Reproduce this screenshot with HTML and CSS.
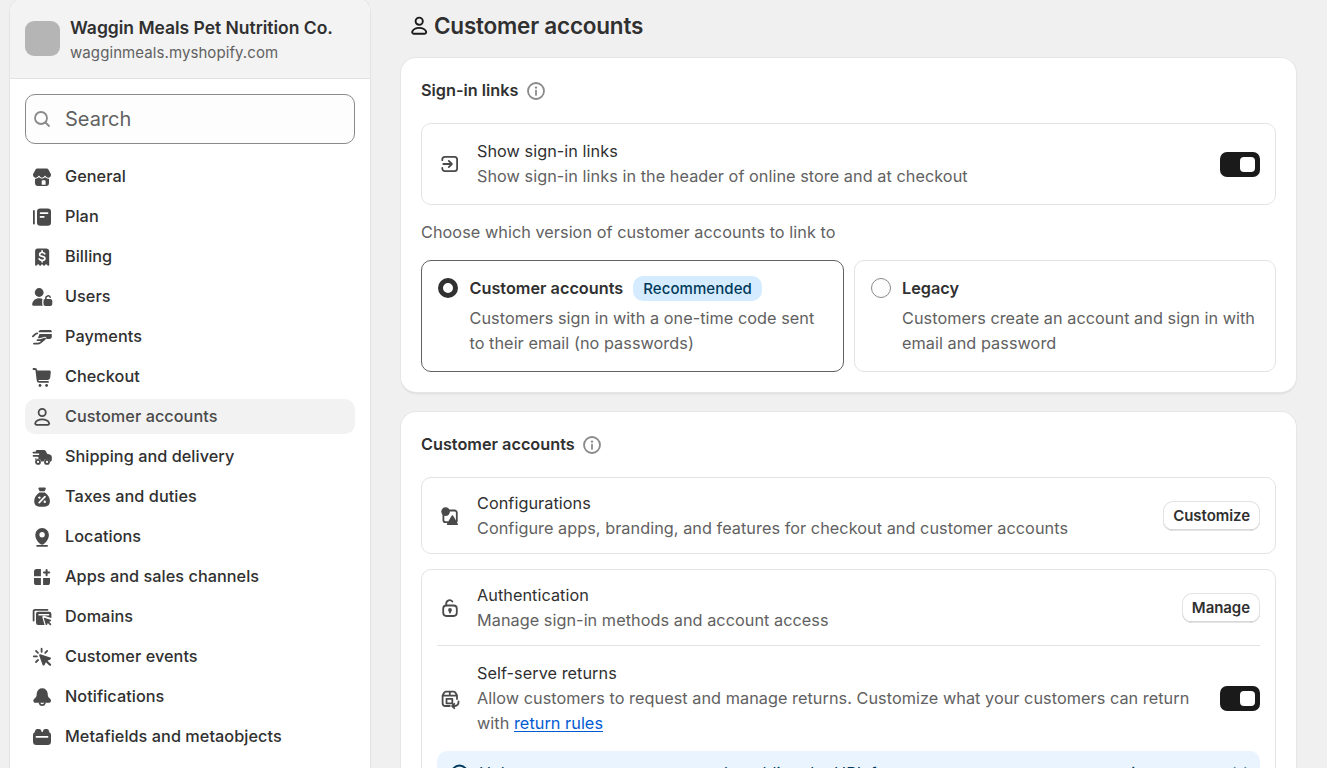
FILE: index.html
```html
<!DOCTYPE html>
<html lang="en">
<head>
<meta charset="utf-8">
<title>Customer accounts</title>
<link rel="stylesheet" href="styles.css">
</head>
<body>
<div class="page">
  <aside class="sidebar">
    <div class="store">
      <div class="avatar"></div>
      <div>
        <div class="store-name">Waggin Meals Pet Nutrition Co.</div>
        <div class="store-url">wagginmeals.myshopify.com</div>
      </div>
    </div>
    <div class="search">
      <svg class="icon20" viewBox="0 0 20 20" fill="none" stroke="#8a8a8a" stroke-width="1.8" stroke-linecap="round"><circle cx="9" cy="9" r="6"/><path d="M13.500 13.500 17 17"/></svg>
      <span>Search</span>
    </div>
    <nav class="nav">
      <a class="item"><svg class="icon20" viewBox="0 0 20 20"><path d="M5.200 1.500h9.600c.7 0 1.300.400 1.600 1L19 7.300v.7a2.700 2.700 0 0 1-4.600 1.900L13.300 8.800a.4.400 0 0 0-.6 0l-1.100 1.100a2.300 2.300 0 0 1-3.200 0L7.300 8.800a.4.400 0 0 0-.6 0L5.600 9.900A2.700 2.700 0 0 1 1 8v-.7l2.600-4.800c.3-.6.900-1 1.600-1Z"/><path fill-rule="evenodd" d="M3 11.700c1.300.2 2.600-.2 3.600-1.100L7 10.300l.4.300c1.500 1.400 3.700 1.400 5.200 0l.4-.3.400.3c1 .9 2.300 1.300 3.600 1.100V16a3 3 0 0 1-3 3H6a3 3 0 0 1-3-3ZM10.600 13.300c-.5 0-.9.4-.9.9V17.700h3.900v-3.500c0-.5-.4-.9-.9-.9Z"/></svg>General</a>
      <a class="item"><svg class="icon20" viewBox="0 0 20 20"><path d="M1.900 4v12.500" class="line"/><path fill-rule="evenodd" d="M8.200 1.500h7.600A3.200 3.200 0 0 1 19 4.700v10.800a3.200 3.200 0 0 1-3.200 3.200H8.200A3.200 3.200 0 0 1 5 15.500V4.700a3.200 3.200 0 0 1 3.200-3.200ZM8.600 5.200a.9.900 0 0 0 0 1.800h6.900a.9.900 0 0 0 0-1.800ZM8.600 9a.9.900 0 0 0 0 1.800h3.100a.9.900 0 0 0 0-1.800Z"/></svg>Plan</a>
      <a class="item"><svg class="icon20" viewBox="0 0 20 20"><path d="M6 1.500h8.500A2.700 2.700 0 0 1 17.200 4v14c0 .8-.9 1.100-1.500.6L14 17l-1.300 1.400c-.4.400-.9.400-1.300 0L10.100 17l-1.300 1.400c-.4.400-.9.400-1.300 0L6.200 17l-1.700 1.600c-.5.500-1.400.2-1.400-.6V4.200A2.700 2.700 0 0 1 6 1.500Z"/><path class="cut" d="M12.800 6.800c-.5-.9-1.500-1.300-2.700-1.300-1.400 0-2.500.7-2.500 1.900 0 2.800 5.300 1.200 5.300 4 0 1.200-1.200 1.900-2.700 1.900-1.400 0-2.500-.5-3-1.500M10.100 3.800v1.500M10.100 13.500v1.300"/></svg>Billing</a>
      <a class="item"><svg class="icon20" viewBox="0 0 20 20"><circle cx="7.200" cy="5.500" r="4.400"/><path d="M7.200 11.200c1.300 0 2.500.2 3.400.7-.3.500-.4 1-.4 1.600v3.200c0 .8.200 1.500.7 2.100H1.700c-1 0-1.700-.8-1.500-1.800.5-3.400 3.300-5.800 7-5.800Z"/><path fill-rule="evenodd" d="M13 12v-.8a3.100 3.100 0 0 1 5.900-1.300c.4.900-.9 1.600-1.400.7a1.500 1.500 0 0 0-2.900.6v.8h3.700c1.100 0 2 .9 2 2v3c0 1.100-.9 2-2 2H13.500c-1.100 0-2-.9-2-2v-3c0-1.100.5-1.900 1.500-2Z"/></svg>Users</a>
      <a class="item"><svg class="icon20" viewBox="0 0 20 20"><path d="M8.800 3h9.400c.9 0 1.600.7 1.600 1.600v.6H6.400C6.800 3.800 7.500 3 8.800 3ZM7.500 7h12.300v2.800c0 1.300-.9 2.200-2.200 2.200h-3.300c.5-1.400-.7-2.600-2.200-2.100L7.200 11.300c-.6.200-1.300-.2-1.100-.9Z"/><path class="line" d="M.9 9.400 3 7.400c.6-.6 1.300-.9 2.200-1M2 16.600h3.500c1.100 0 2.100-.3 3-1l4.500-3.900-4.700 1.500H5.500"/></svg>Payments</a>
      <a class="item"><svg class="icon20" viewBox="0 0 20 20"><path d="M4 3.500h13.300c.9 0 1.500.7 1.500 1.600l-.6 5.300c-.2 1.500-1.300 2.500-2.700 2.500H5.700Z"/><path class="line" d="M1.500 2h1.300c.9 0 1.500.6 1.600 1.500l1.200 9.800c.1.900.7 1.600 1.600 1.600H16"/><circle cx="8" cy="18.500" r="1.400"/><circle cx="14.600" cy="18.500" r="1.400"/></svg>Checkout</a>
      <a class="item active"><svg class="icon20" viewBox="0 0 20 20"><circle class="line" cx="10.200" cy="5.500" r="3.600"/><path class="line" d="M10.200 12.300c3.600 0 5.800 1.500 6.800 3.300.6 1-.1 2.200-1.300 2.200h-11c-1.200 0-1.900-1.200-1.300-2.200 1-1.800 3.200-3.300 6.800-3.300Z"/></svg>Customer accounts</a>
      <a class="item"><svg class="icon20" viewBox="0 0 20 20"><path fill-rule="evenodd" d="M4.400 3h7.200c1.200 0 2 .5 2.500 1.500l1 2.200 2.800.9c1.200.4 1.900 1.300 1.900 2.500v2.500c0 1.300-.7 2.200-1.700 2.400a3.400 3.400 0 0 0-6.600-.4h-2.200A3.400 3.400 0 0 0 3 13.200v-1.700h2.600a.9.900 0 0 0 0-1.800H1.500a.8.800 0 0 1 0-1.600h5.200a.9.900 0 0 0 0-1.700H1.300a.8.800 0 0 1 0-1.600h2.300Z"/><circle class="line" cx="6" cy="14.900" r="2"/><circle class="line" cx="15" cy="14.900" r="2"/></svg>Shipping and delivery</a>
      <a class="item"><svg class="icon20" viewBox="0 0 20 20"><path d="M7.300.5h5.600c.7 0 1.200.8.800 1.400l-1.100 2.400h-5L6.500 1.900C6.100 1.300 6.600.5 7.300.5ZM7.400 5.600h5.400c3 2 5.100 5.200 5.100 8.500 0 3.700-2.100 5.700-5.400 5.700H7.600c-3.300 0-5.400-2-5.400-5.700 0-3.300 2.200-6.500 5.200-8.500Z"/><path class="cut" d="M13 9.700l-5.800 6"/><circle cx="7.400" cy="10.600" r="1.200" fill="#fff"/><circle cx="12.800" cy="14.800" r="1.200" fill="#fff"/></svg>Taxes and duties</a>
      <a class="item"><svg class="icon20" viewBox="0 0 20 20"><path fill-rule="evenodd" d="M10.100 1.100a6.700 6.700 0 0 1 6.800 6.600c0 3.900-2.600 7.700-5.400 9.500a2.600 2.600 0 0 1-2.800 0C5.900 15.400 3.300 11.600 3.300 7.700a6.700 6.700 0 0 1 6.800-6.600Zm0 4a2.700 2.700 0 1 0 0 5.400 2.700 2.700 0 0 0 0-5.400Z"/><path class="line" d="M5.100 18.800h10"/></svg>Locations</a>
      <a class="item"><svg class="icon20" viewBox="0 0 20 20"><path d="M4.600 2h4.300v7.300H2V4.600A2.600 2.600 0 0 1 4.600 2ZM2 11h6.900v7H4.600A2.600 2.600 0 0 1 2 15.400ZM11.100 11H18v4.400a2.600 2.600 0 0 1-2.600 2.600h-4.300Z"/><path class="line thick" d="M14.600 3v5.200M12 5.600h5.200"/></svg>Apps and sales channels</a>
      <a class="item"><svg class="icon20" viewBox="0 0 20 20"><path class="line" d="M1.600 13.500V4.200c0-.8.600-1.400 1.400-1.400h12.500"/><path fill-rule="evenodd" d="M6 4.800h11.200a2.200 2.200 0 0 1 2.200 2.200v4l-7.300-2.200c-1.100-.3-2 .6-1.700 1.700l2.200 7.500H6.200A2.200 2.200 0 0 1 4 15.800V6.800a2 2 0 0 1 2-2ZM6.500 7v1.400h10.700V7Z"/><path d="m12.300 10.700 6.200 2c.8.300.8 1.200.1 1.500l-1.500.6 2.300 2.400-1.200 1.200-2.400-2.400-.6 1.500c-.3.700-1.300.7-1.500-.1l-1.900-6.200c-.1-.4.100-.6.500-.5Z"/></svg>Domains</a>
      <a class="item"><svg class="icon20" viewBox="0 0 20 20"><path class="line" d="M9.600 1.700v3.100M1.800 9.400h3.100M4 3.900l2 2M15.200 3.900l-2 2M4 15l2-2"/><path d="m8.300 7.300 10 3.200c.9.300.9 1.500 0 1.900l-2.800 1.300 3.400 3.300c.9.900-.6 2.500-1.600 1.600l-3.400-3.300-1.400 2.700c-.4.800-1.600.8-1.900-.1L7.200 8.400c-.2-.7.400-1.300 1.100-1.100Z"/></svg>Customer events</a>
      <a class="item"><svg class="icon20" viewBox="0 0 20 20"><path d="M10.200 1.200c3 0 5.100 2.100 5.400 4.900l.3 2.600c.1.700.4 1.300.9 1.800l1.500 1.500c1.400 1.400.6 3.800-1.500 3.800H3.500C1.400 15.800.7 13.400 2.100 12l1.500-1.500c.5-.5.800-1.100.9-1.800l.3-2.600c.3-2.800 2.400-4.900 5.400-4.900Z"/><path class="line" d="M7.600 16.200a2.700 2.700 0 0 0 5.200 0"/></svg>Notifications</a>
      <a class="item"><svg class="icon20" viewBox="0 0 20 20"><path fill-rule="evenodd" d="M5.300 2h1.900c1 0 1.900.8 2.200 1.900L9.700 5h1l.3-1.100C11.300 2.800 12.100 2 13.200 2h1.700c1.100 0 1.900.8 2.100 1.900l.3 1.400A3 3 0 0 1 19 8v6.600a3.500 3.500 0 0 1-3.500 3.500h-11A3.500 3.500 0 0 1 1 14.600V8a3 3 0 0 1 1.700-2.700L3.100 4C3.300 2.800 4.200 2 5.300 2ZM4.500 9a.9.900 0 0 0 0 1.800h11a.9.900 0 0 0 0-1.800Z"/></svg>Metafields and metaobjects</a>
    </nav>
  </aside>

  <main class="main">
    <h1 class="title"><svg class="icon20" viewBox="0 0 20 20" fill="none" stroke="#1a1a1a" stroke-width="1.900"><circle cx="10.200" cy="5.200" r="3.600"/><path d="M10.200 11.900c3.600 0 5.800 1.500 6.800 3.300.6 1-.1 2.500-1.300 2.500h-11c-1.200 0-1.900-1.500-1.300-2.500 1-1.800 3.200-3.300 6.800-3.300Z"/></svg><span>Customer accounts</span></h1>

    <section class="card">
      <h2 class="heading">Sign-in links <svg class="icon20" viewBox="0 0 20 20"><circle cx="10" cy="10" r="8" fill="none" stroke="#8a8a8a" stroke-width="1.800"/><path d="M10 9.600v4.300" stroke="#8a8a8a" stroke-width="1.800" stroke-linecap="round"/><circle cx="10" cy="6.600" r="1.200" fill="#8a8a8a"/></svg></h2>
      <div class="box">
        <div class="row row-tall">
          <svg class="icon25" viewBox="0 0 25 25"><path class="line" d="M5.300 8.200V7.500a2.600 2.600 0 0 1 2.600-2.600h9.600a2.600 2.600 0 0 1 2.600 2.600v9.100a2.600 2.600 0 0 1-2.600 2.600H7.900A2.600 2.600 0 0 1 5.300 16.600v-.7M6.300 12h8.300M11.800 8.900l3.100 3.100-3.100 3.100"/></svg>
          <div class="text"><div>Show sign-in links</div><div class="sub">Show sign-in links in the header of online store and at checkout</div></div>
          <span class="toggle"></span>
        </div>
      </div>
      <p class="hint">Choose which version of customer accounts to link to</p>
      <div class="options">
        <div class="option selected">
          <span class="radio"></span>
          <div><div class="option-name">Customer accounts <span class="badge">Recommended</span></div><div class="option-desc">Customers sign in with a one-time code sent<br>to their email (no passwords)</div></div>
        </div>
        <div class="option">
          <span class="radio"></span>
          <div><div class="option-name">Legacy</div><div class="option-desc">Customers create an account and sign in with<br>email and password</div></div>
        </div>
      </div>
    </section>

    <section class="card">
      <h2 class="heading">Customer accounts <svg class="icon20" viewBox="0 0 20 20"><circle cx="10" cy="10" r="8" fill="none" stroke="#8a8a8a" stroke-width="1.800"/><path d="M10 9.600v4.300" stroke="#8a8a8a" stroke-width="1.800" stroke-linecap="round"/><circle cx="10" cy="6.600" r="1.200" fill="#8a8a8a"/></svg></h2>
      <div class="box">
        <div class="row">
          <svg class="icon25" viewBox="0 0 25 25"><path class="line" d="M11 6.500h6.500a2.300 2.300 0 0 1 2.300 2.300v8.400M11 18.200H8.700a2.300 2.300 0 0 1-2.300-2.300V11"/><circle cx="8.600" cy="7.600" r="4.300"/><path d="M14.300 12.200c.6-1.100 1.600-1.100 2.200 0l4.200 7.200c.5.900.1 1.600-.9 1.600h-8.800c-1 0-1.400-.7-.9-1.600Z"/></svg>
          <div class="text"><div>Configurations</div><div class="sub">Configure apps, branding, and features for checkout and customer accounts</div></div>
          <button class="button">Customize</button>
        </div>
      </div>
      <div class="box">
        <div class="row">
          <svg class="icon25" viewBox="0 0 25 25"><rect class="line" x="6.200" y="9.500" width="13.600" height="10.500" rx="3.200"/><path class="line" d="M9.200 9.300V7.700a3.500 3.500 0 0 1 6.200-2.200"/><circle cx="13" cy="14" r="1.900"/><path class="line" d="M13 14.500v2"/></svg>
          <div class="text"><div>Authentication</div><div class="sub">Manage sign-in methods and account access</div></div>
          <button class="button">Manage</button>
        </div>
        <div class="divider"></div>
        <div class="row row-tall">
          <svg class="icon25" viewBox="0 0 25 25"><path class="line" d="M12.800 20H8.400a2.800 2.800 0 0 1-2.800-2.800V9.500l1.500-2.800c.4-.7 1-1.100 1.800-1.100h7.800c.8 0 1.400.4 1.800 1.100L20 9.500v3.500M5.600 9.600H20M12.800 5.800v3.600M15.300 14.800v-2H9.500v4.500h5.800v-2M21.500 15.500v.8a3.600 3.600 0 0 1-3.600 3.700h-2.400M17.300 17.800l-2.200 2.200 2.200 2.200"/></svg>
          <div class="text"><div>Self-serve returns</div><div class="sub">Allow customers to request and manage returns. Customize what your customers can return<br>with <a class="link" href="#">return rules</a></div></div>
          <span class="toggle"></span>
        </div>
        <div class="banner">
          <svg class="icon25" viewBox="0 0 25 25" fill="none" stroke="#003a5a" stroke-width="1.900"><circle cx="12.500" cy="12.500" r="8"/><path d="M12.500 12v4.500"/></svg>
          <div class="banner-text">Help customers access returns by adding the URL for customer accounts to your main menu</div>
          <svg class="icon20 close" viewBox="0 0 20 20" fill="none" stroke="#5a8aa5" stroke-width="1.500" stroke-linecap="round"><path d="m4.500 4.500 11 11m0-11-11 11"/></svg>
        </div>
      </div>
    </section>
  </main>
</div>
</body>
</html>
```
FILE: styles.css
```css
* { box-sizing: border-box; }

body {
  margin: 0;
  height: 768px;
  overflow: hidden;
  background: #f0f0f0;
  color: #303030;
  font-family: Inter, "Liberation Sans", sans-serif;
  font-size: 16.25px;
  line-height: 25px;
  letter-spacing: 0.045px;
}

.page { display: flex; gap: 30px; height: 768px; padding-left: 9px; overflow: hidden; }

.icon20 { width: 20px; height: 20px; flex: none; overflow: visible; }
.icon25 { width: 25px; height: 25px; flex: none; overflow: visible; }
.line { fill: none; stroke: #4a4a4a; stroke-width: 1.8; stroke-linecap: round; stroke-linejoin: round; }
.thick { stroke-width: 2; }
.cut { fill: none; stroke: #fff; stroke-width: 1.7; stroke-linecap: round; }

.sidebar {
  width: 362px;
  height: 771px;
  flex: none;
  margin-top: -3px;
  background: #fff;
  border: 1px solid #e3e3e3;
  border-bottom: 0;
  border-radius: 15px 15px 0 0;
  overflow: hidden;
}
.store {
  display: flex;
  gap: 10px;
  height: 81px;
  padding: 17px 15px 0;
  background: #f3f3f3;
  border-bottom: 1px solid #e3e3e3;
}
.avatar { width: 35px; height: 35px; margin-top: 6px; border-radius: 9px; background: #b5b5b5; }
.store-name { font-size: 17.5px; font-weight: 600; letter-spacing: -0.02px; white-space: nowrap; }
.store-url { font-size: 15px; letter-spacing: 0.08px; color: #616161; }
.search {
  display: flex;
  align-items: center;
  gap: 13px;
  height: 50px;
  margin: 15px 15px;
  padding: 0 6px;
  border: 1px solid #8a8a8a;
  border-radius: 10px;
  background: #fdfdfd;
  color: #616161;
  font-size: 20px;
  letter-spacing: 0;
}
.nav { display: flex; flex-direction: column; gap: 5px; margin: 0 15px; }
.item {
  display: flex;
  align-items: center;
  gap: 13px;
  height: 35px;
  padding: 0 7px;
  border-radius: 10px;
  font-weight: 500;
}
.item .icon20 { fill: #4a4a4a; }
.active { background: #f2f2f2; color: #4a4a4a; }

.main { width: 895px; }
.title {
  display: flex;
  align-items: center;
  gap: 5px;
  height: 32px;
  margin: 10px 0 16px;
  padding-left: 8px;
  font-size: 22.5px;
  font-weight: 600;
  letter-spacing: -0.22px;
}
.title span { margin-top: -2px; }
.card {
  margin-bottom: 20px;
  padding: 20px;
  border-radius: 15px;
  background: #fff;
  box-shadow: 0 0 0 1px #e6e6e6, 0 1px 0 #c4c4c4, 0 2px 2px rgba(0, 0, 0, 0.08);
}
.heading { display: flex; align-items: center; gap: 7.5px; margin: 0 0 20px; font-size: 16.25px; font-weight: 600; letter-spacing: 0; }
.heading .icon20 { margin-top: 1px; }
.box { margin-bottom: 15px; padding: 0 15px; border: 1px solid #e3e3e3; border-radius: 10px; }
.row { display: flex; align-items: center; gap: 15px; padding: 13px 0 12px; }
.row-tall { padding: 15px 0; }
.row .icon25 { fill: #4a4a4a; }
.text { flex: 1; white-space: nowrap; }
.sub { color: #616161; }
.toggle {
  display: flex;
  justify-content: flex-end;
  width: 40px;
  height: 25px;
  padding: 5px;
  border-radius: 7px;
  background: #1a1a1a;
}
.toggle::after { content: ""; width: 15px; height: 15px; border-radius: 4px; background: #fff; }
.hint { margin: 0 0 15px; color: #616161; }

.options { display: flex; gap: 10px; }
.option {
  display: flex;
  flex: 1;
  gap: 11.5px;
  padding: 15px 16px;
  border: 1px solid #e3e3e3;
  border-radius: 10px;
  white-space: nowrap;
}
.selected { border-color: #616161; }
.radio { width: 20px; height: 20px; margin-top: 2px; border: 1px solid #8a8a8a; border-radius: 50%; background: #fdfdfd; flex: none; }
.selected .radio { border: 5px solid #303030; background: #fff; }
.option-name { display: flex; gap: 10px; font-weight: 600; letter-spacing: 0; }
.option-desc { margin-top: 5px; color: #616161; }
.badge { padding: 0 10px; border-radius: 10px; background: #d5ebff; color: #003a5a; font-size: 15px; font-weight: 500; letter-spacing: 0.08px; }

.button {
  height: 30px;
  padding: 0 10px 2px;
  border: 0;
  border-radius: 10px;
  background: #fff;
  box-shadow: inset 0 0 0 1px #e3e3e3, inset 0 -2px 0 -0.5px #b5b5b5;
  color: #303030;
  font: 600 15px Inter, sans-serif;
  letter-spacing: -0.06px;
}
.divider { height: 1px; background: #e3e3e3; }
.link { color: #005bd3; text-underline-offset: 2px; }
.banner {
  display: flex;
  gap: 7px;
  padding: 10px;
  border-radius: 10px;
  background: #eaf4ff;
  color: #003a5a;
}
.banner-text { flex: 1; }
.close { margin-top: 2px; }
```
